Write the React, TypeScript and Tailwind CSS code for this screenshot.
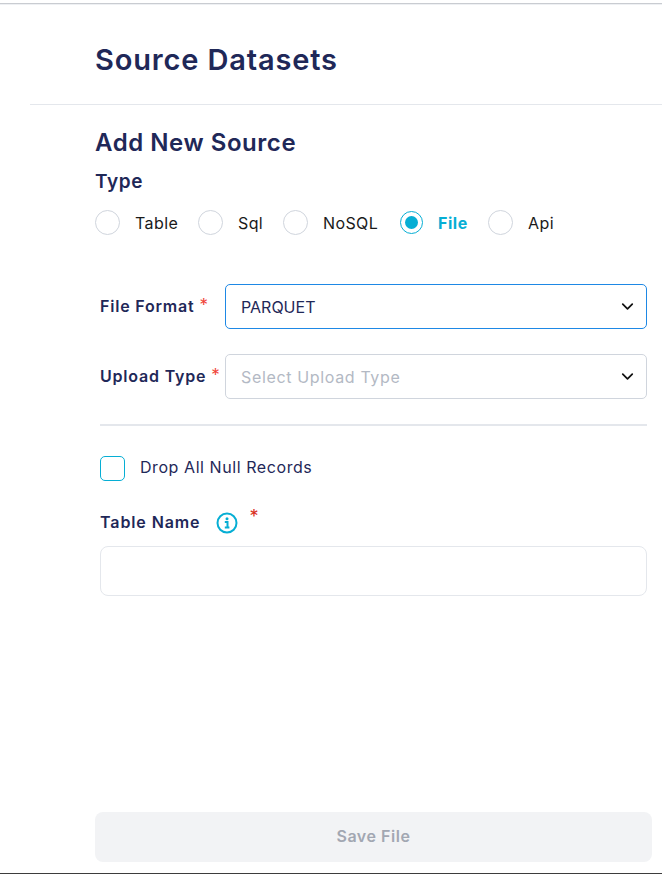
import { ChevronDown } from 'lucide-react'

const font = { fontFamily: 'Inter, "Noto Sans", sans-serif' }

function Radio({ label, checked, className }: { label: string; checked?: boolean; className: string }) {
  return (
    <div className={`flex items-center ${className}`}>
      {checked ? (
        <span className="flex h-[23px] w-[23px] items-center justify-center rounded-full border-[1.5px] border-[#06aed4]">
          <span className="h-[13px] w-[13px] rounded-full bg-[#06aed4]" />
        </span>
      ) : (
        <span className="h-[25px] w-[25px] rounded-full border border-[#d0d5dd]" />
      )}
      <span
        className={
          checked
            ? 'ml-[15px] text-[16px] font-bold tracking-[0.55px] text-[#06aed4]'
            : 'ml-[15px] text-[16px] tracking-[0.4px] text-[#1a1a1a]'
        }
      >
        {label}
      </span>
    </div>
  )
}

function SelectRow({ label, value, focused }: { label: string; value: string; focused?: boolean }) {
  return (
    <div className="flex items-center">
      <div className="mb-[2px] flex w-[125px] items-center text-[16px] font-semibold leading-none tracking-[0.8px] text-[#1f2858]">
        <span>{label}</span>
        <span className="ml-[5px] text-[17px] font-normal text-[#f04438]">*</span>
      </div>
      <div
        className={`flex h-[45px] flex-1 items-center justify-between rounded-[5px] border pl-[15px] pr-[9px] text-[16px] ${
          focused ? 'border-[#1e88e5] text-[#1f2858]' : 'border-[#d0d5dd] tracking-[0.65px] text-[#b3b9c4]'
        }`}
      >
        <span>{value}</span>
        <ChevronDown className="h-[19px] w-[19px] text-[#111111]" strokeWidth={2.2} />
      </div>
    </div>
  )
}

export default function App() {
  return (
    <div style={font} className="flex h-[874px] w-[662px] flex-col overflow-hidden bg-white">
      <div className="mt-[3px] h-px bg-[#c9ccd1]" />
      <div className="h-px bg-[#eef0f3]" />

      <h1 className="mt-[36px] ml-[95px] text-[29px] font-semibold leading-[38px] tracking-[0.85px] text-[#1f2858]">
        Source Datasets
      </h1>
      <div className="mt-[25px] ml-[30px] h-px bg-[#e4e7ec]" />

      <div className="flex flex-1 flex-col pl-[95px] pr-[10px]">
        <h2 className="mt-[21px] text-[24px] font-semibold leading-[34px] tracking-[0.55px] text-[#1f2858]">
          Add New Source
        </h2>
        <div className="mt-[10px] text-[19px] font-semibold leading-[24px] tracking-[0.6px] text-[#1f2858]">Type</div>

        <div className="mt-[16px] flex items-center">
          <Radio label="Table" className="w-[103px]" />
          <Radio label="Sql" className="w-[85px]" />
          <Radio label="NoSQL" className="w-[117px]" />
          <Radio label="File" checked className="w-[88px]" />
          <Radio label="Api" className="w-[80px]" />
        </div>

        <div className="mt-[49px] ml-[5px] mr-[5px] flex flex-col gap-[25px]">
          <SelectRow label="File Format" value="PARQUET" focused />
          <SelectRow label="Upload Type" value="Select Upload Type" />
        </div>

        <div className="mt-[25px] ml-[5px] mr-[5px] h-[2px] bg-[#e4e7ec]" />

        <div className="mt-[30px] ml-[5px] flex h-[25px] items-center">
          <span className="h-[25px] w-[25px] rounded-[5px] border border-[#06aed4]" />
          <span className="mb-[3px] ml-[15px] text-[16px] leading-[20px] tracking-[0.57px] text-[#1f2858]">
            Drop All Null Records
          </span>
        </div>

        <div className="mt-[29px] ml-[5px] flex h-[24px] items-center text-[16px] font-semibold leading-[24px] tracking-[0.9px] text-[#1f2858]">
          <span>Table Name</span>
          <svg className="ml-[16px] mt-[2px] h-[22px] w-[22px]" viewBox="0 0 22 22" fill="none">
            <circle cx="11" cy="11" r="9.5" stroke="#06aed4" strokeWidth="2" />
            <circle cx="11" cy="6.8" r="1.5" fill="#06aed4" />
            <path d="M8.8 10.1h2.7v5M8.8 15.6h4.6" stroke="#06aed4" strokeWidth="2" />
          </svg>
          <span className="mb-[10px] ml-[11px] text-[18px] leading-none font-normal text-[#d92d20]">*</span>
        </div>

        <div className="mt-[12px] ml-[5px] mr-[5px] h-[50px] rounded-[8px] border border-[#e4e7ec]" />

        <button className="mt-auto mb-[11px] flex h-[50px] items-center justify-center rounded-[8px] bg-[#f2f3f5] pb-[2px] text-[16px] font-semibold tracking-[0.55px] text-[#a2a7b2]">
          Save File
        </button>
      </div>

      <div className="h-px bg-[#3d3d3d]" />
    </div>
  )
}
